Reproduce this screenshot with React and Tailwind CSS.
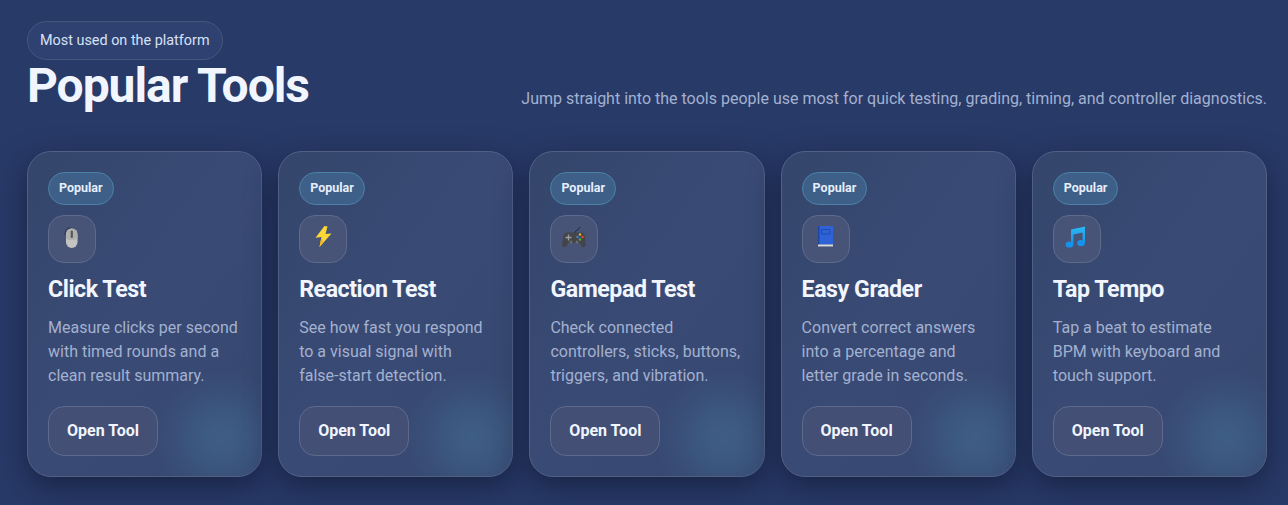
const MouseIcon = () => (
  <svg viewBox="1 1 46 46" className="h-[46px] w-[46px]">
    <path d="M17 20c0-4 2-7 5-7s3 1 3 2" fill="none" stroke="#2c3345" strokeWidth="1" />
    <rect x="18" y="13.5" width="11.5" height="19.5" rx="5.7" fill="#c4c4c2" />
    <path d="M18 23c0-6 1-9.500 5.700-9.500s5.800 3.500 5.800 9.500c-3 3-8.500 3-11.500 0z" fill="#b0b0ae" />
    <rect x="22.700" y="15.500" width="2.200" height="7.500" rx="1.100" fill="#55585f" />
  </svg>
);

const BoltIcon = () => (
  <svg viewBox="1 1 46 46" className="h-[46px] w-[46px]">
    <path d="M25.500 11 28.500 11.500 26.500 19 32.500 18.500 20.500 32 22.500 22 16.500 22.700z" fill="#fdd835" />
    <path d="M22.500 22 20.500 32 24.500 27.500z" fill="#f2b824" />
  </svg>
);

const GamepadIcon = () => (
  <svg viewBox="1 1 46 46" className="h-[46px] w-[46px]">
    <path d="M25 18c0-3 4-3 5-6" fill="none" stroke="#22283a" strokeWidth="1" />
    <path d="M17.500 17.500h13c2.500 0 4 1.500 4.300 4l1 8c.3 3-3 3.500-4.300 1.500L29.500 28h-11l-2 3c-1.300 2-4.600 1.500-4.300-1.500l1-8c.3-2.500 1.800-4 4.300-4z" fill="#434548" />
    <path d="M15.500 22.500h6M18.500 19.500v6" stroke="#9a9c9f" strokeWidth="1.400" />
    <circle cx="30" cy="19.500" r="1.200" fill="#e5b82d" />
    <circle cx="32.500" cy="22" r="1.200" fill="#d9533a" />
    <circle cx="27.500" cy="22" r="1.200" fill="#3f86e0" />
    <circle cx="30" cy="24.500" r="1.200" fill="#4fae54" />
    <circle cx="21" cy="27" r="1.500" fill="#6a6c70" />
    <circle cx="27" cy="27" r="1.500" fill="#6a6c70" />
  </svg>
);

const BookIcon = () => (
  <svg viewBox="1 1 46 46" className="h-[46px] w-[46px]">
    <path d="M16 11h15v18.500H16z" fill="#2f62d6" />
    <path d="M16 11h1.500v18.500H16z" fill="#1f469f" />
    <rect x="19.500" y="14.500" width="8.500" height="4.500" rx="0.600" fill="none" stroke="#1f4aa8" strokeWidth="1" />
    <path d="M16 29.500h15v2H16z" fill="#d9dbdf" />
    <path d="M16 31.500h15v.6H16z" fill="#7d8597" />
  </svg>
);

const MusicIcon = () => (
  <svg viewBox="1 1 46 46" className="h-[46px] w-[46px]">
    <defs>
      <linearGradient id="noteFill" x1="0" y1="0" x2="0" y2="1">
        <stop offset="0" stopColor="#2cb8f2" />
        <stop offset="1" stopColor="#1592ea" />
      </linearGradient>
    </defs>
    <path d="M18 14.500 32 11.500V28h-2.400V17.500L20.400 19.500V30H18z" fill="url(#noteFill)" />
    <ellipse cx="16.500" cy="29.500" rx="3.900" ry="3.100" fill="#1592ea" />
    <ellipse cx="28" cy="28" rx="3.900" ry="3.100" fill="#1592ea" />
  </svg>
);

const tools = [
  { name: 'Click Test', icon: <MouseIcon />, text: 'Measure clicks per second with timed rounds and a clean result summary.' },
  { name: 'Reaction Test', icon: <BoltIcon />, text: 'See how fast you respond to a visual signal with false-start detection.' },
  { name: 'Gamepad Test', icon: <GamepadIcon />, text: 'Check connected controllers, sticks, buttons, triggers, and vibration.' },
  { name: 'Easy Grader', icon: <BookIcon />, text: 'Convert correct answers into a percentage and letter grade in seconds.' },
  { name: 'Tap Tempo', icon: <MusicIcon />, text: 'Tap a beat to estimate BPM with keyboard and touch support.' },
];

function ToolCard({ tool }) {
  return (
    <div className="relative overflow-hidden rounded-[24px] border border-[#515f85] bg-gradient-to-br from-[#35466c] via-[#394a75] to-[#36486f] p-5 shadow-[0_10px_30px_rgba(15,22,45,0.6)]">
      <div className="pointer-events-none absolute right-[-30px] bottom-[-32px] h-[140px] w-[140px] rounded-full bg-[radial-gradient(circle,rgba(62,94,134,1)_0%,rgba(62,94,134,0.7)_25%,rgba(62,94,134,0.25)_50%,rgba(62,94,134,0)_70%)]"></div>
      <div className="relative flex flex-col items-start">
        <span className="flex h-[33px] items-center rounded-full border border-[#4b83a6] bg-[#3d5f88] px-[10px] text-[12.5px] font-bold text-[#e6eefc]">
          Popular
        </span>
        <div className="mt-[10px] flex h-12 w-12 items-center justify-center rounded-2xl border border-[#5e6a8c] bg-[#475478]">
          {tool.icon}
        </div>
        <h3 className="mt-[10px] text-[23.2px] leading-[32px] font-bold tracking-[-0.02em] text-[#f1f5fe]">{tool.name}</h3>
        <p className="mt-[11px] text-base leading-6 text-[#a3b1d0]">{tool.text}</p>
        <button className="mt-[18px] flex h-[50px] w-[110px] items-center justify-center rounded-2xl border border-[#5e6a8c] bg-[#434f75] text-base font-bold text-[#f1f5fe]">
          Open Tool
        </button>
      </div>
    </div>
  );
}

export default function App() {
  return (
    <div className="min-h-[505px] bg-[#283a68] pt-[21px] pr-[21px] pl-[27px] font-['Roboto',sans-serif]">
      <div className="flex items-end justify-between">
        <div className="flex flex-col items-start">
          <span className="flex h-[39px] items-center rounded-full border border-[#47567d] bg-[#2f4170] px-3 text-[14.4px] text-[#d7e1f7]">
            Most used on the platform
          </span>
          <h2 className="text-5xl leading-[52px] font-bold tracking-[-1.04px] text-[#f1f5fe]">Popular Tools</h2>
        </div>
        <p className="pb-[1px] text-base leading-6 text-[#a3b1d0]">
          Jump straight into the tools people use most for quick testing, grading, timing, and controller diagnostics.
        </p>
      </div>
      <div className="mt-[39px] grid grid-cols-5 gap-4">
        {tools.map((tool) => (
          <ToolCard key={tool.name} tool={tool} />
        ))}
      </div>
    </div>
  );
}
